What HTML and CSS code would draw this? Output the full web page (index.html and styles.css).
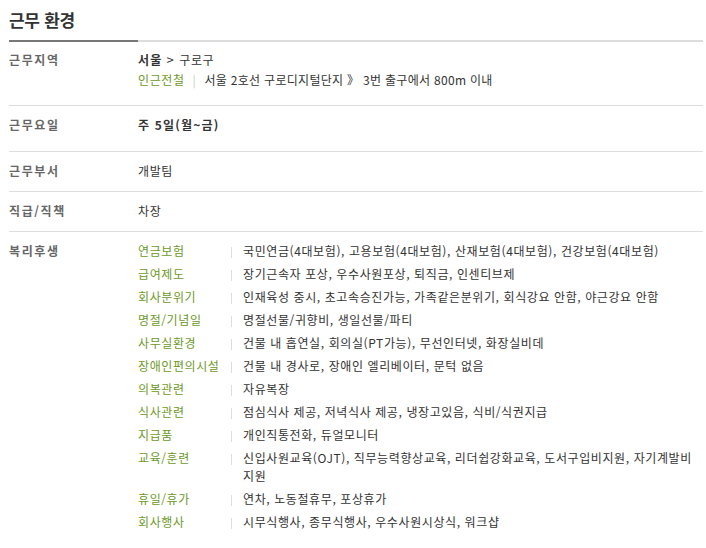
FILE: index.html
```html
<!DOCTYPE html>
<html lang="ko">
<head>
<meta charset="utf-8">
<link rel="stylesheet" href="styles.css">
</head>
<body>
<section class="work">
  <h2 class="title">근무 환경</h2>
  <div class="rule"><span class="rule-dark"></span></div>
  <dl class="info">
    <div class="row row-area">
      <dt>근무지역</dt>
      <dd>
        <div class="loc"><strong>서울</strong><span class="gt">&gt;</span>구로구</div>
        <div class="subway"><span class="green">인근전철</span><span class="bar">|</span><span class="station">서울 2호선 구로디지털단지 》 3번 출구에서 800m 이내</span></div>
      </dd>
    </div>
    <div class="row row-days">
      <dt>근무요일</dt>
      <dd><strong>주 5일(월~금)</strong></dd>
    </div>
    <div class="row">
      <dt>근무부서</dt>
      <dd>개발팀</dd>
    </div>
    <div class="row">
      <dt>직급/직책</dt>
      <dd>차장</dd>
    </div>
    <div class="row row-welfare">
      <dt>복리후생</dt>
      <dd>
        <ul class="welfare">
          <li><span class="wk">연금보험</span><span class="wv">국민연금(4대보험), 고용보험(4대보험), 산재보험(4대보험), 건강보험(4대보험)</span></li>
          <li><span class="wk">급여제도</span><span class="wv">장기근속자 포상, 우수사원포상, 퇴직금, 인센티브제</span></li>
          <li><span class="wk">회사분위기</span><span class="wv">인재육성 중시, 초고속승진가능, 가족같은분위기, 회식강요 안함, 야근강요 안함</span></li>
          <li><span class="wk">명절/기념일</span><span class="wv">명절선물/귀향비, 생일선물/파티</span></li>
          <li><span class="wk">사무실환경</span><span class="wv">건물 내 흡연실, 회의실(PT가능), 무선인터넷, 화장실비데</span></li>
          <li><span class="wk">장애인편의시설</span><span class="wv">건물 내 경사로, 장애인 엘리베이터, 문턱 없음</span></li>
          <li><span class="wk">의복관련</span><span class="wv">자유복장</span></li>
          <li><span class="wk">식사관련</span><span class="wv">점심식사 제공, 저녁식사 제공, 냉장고있음, 식비/식권지급</span></li>
          <li><span class="wk">지급품</span><span class="wv">개인직통전화, 듀얼모니터</span></li>
          <li><span class="wk">교육/훈련</span><span class="wv">신입사원교육(OJT), 직무능력향상교육, 리더쉽강화교육, 도서구입비지원, 자기계발비 지원</span></li>
          <li><span class="wk">휴일/휴가</span><span class="wv">연차, 노동절휴무, 포상휴가</span></li>
          <li><span class="wk">회사행사</span><span class="wv">시무식행사, 종무식행사, 우수사원시상식, 워크샵</span></li>
        </ul>
      </dd>
    </div>
  </dl>
</section>
</body>
</html>
```

FILE: styles.css
```css
* { box-sizing: border-box; }
html, body { margin: 0; padding: 0; background: #fff; }
body {
  font-family: "Noto Sans CJK KR", "Noto Sans", sans-serif;
  font-size: 12px;
  color: #333;
  letter-spacing: 0.6px;
}
.work { padding: 0 3px 0 9px; }
.title {
  margin: 0;
  padding-top: 8px;
  height: 40px;
  font-size: 17px;
  font-weight: bold;
  color: #333;
  letter-spacing: -0.3px;
  line-height: 24px;
}
.rule {
  height: 2px;
  background: #ddd;
}
.rule-dark {
  display: block;
  width: 129px;
  height: 2px;
  background: #777;
}
.info { margin: 0; }
.row {
  display: flex;
  border-bottom: 1px solid #ddd;
  padding: 10px 0 11px;
  line-height: 18px;
}
.row dt {
  width: 129px;
  flex: none;
  color: #666;
  font-weight: bold;
  letter-spacing: 1.6px;
}
.row dd { margin: 0; flex: 1; }
.row-area { padding: 9px 0 16px; }
.row-area .subway { margin-top: 2px; }
.station { letter-spacing: 0.3px; }
.row-days { padding: 10px 0 17px; }
.row-days strong { color: #333; letter-spacing: 1.2px; }
.row-welfare { border-bottom: none; padding-bottom: 0; }
.loc strong { font-weight: bold; letter-spacing: 1.2px; }
.gt { margin: 0 5px 0 4px; font-size: 13px; }
.green { color: #6d9a28; }
.bar { color: #ccc; margin: 0 8px 0 8px; }
.welfare { list-style: none; margin: 0; padding: 0; }
.welfare li { display: flex; margin-bottom: 5px; line-height: 18px; }
.wk {
  width: 94px;
  flex: none;
  color: #6d9a28;
  position: relative;
}
.wk::after {
  content: "";
  position: absolute;
  right: 0;
  top: 5px;
  width: 1px;
  height: 11px;
  background: #ddd;
}
.wv { flex: 1; padding-left: 11px; }
```
